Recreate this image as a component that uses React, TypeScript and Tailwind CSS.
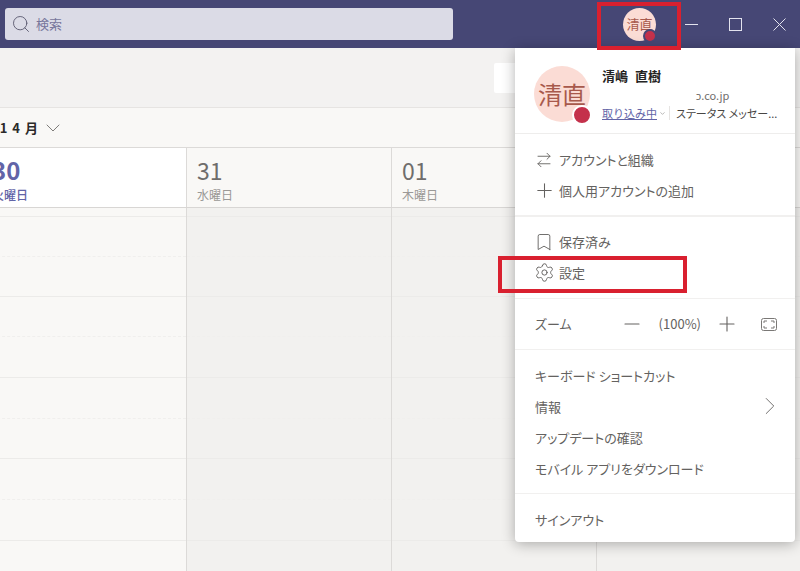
import { ArrowRightLeft, Bookmark, ChevronDown, ChevronRight, Minus, Plus, Search, Settings } from "lucide-react";

const FONT = "[font-family:'Noto_Sans_CJK_JP','Noto_Sans',sans-serif] [font-feature-settings:'palt']";

// px height of each calendar row, with whether its bottom line is dashed
const rows: [number, boolean][] = [
  [9, false],
  [40, true],
  [40, false],
  [40, true],
  [41, false],
  [41, true],
  [40, false],
  [41, true],
  [41, false],
  [31, false],
];

function DayColumn({ muted }: { muted: boolean }) {
  return (
    <div className={`w-[205px] shrink-0 border-r border-[#dcdad8] ${muted ? "bg-[#f2f1ef]" : "bg-[#f9f8f6]"}`}>
      {rows.map(([h, dashed], i) => (
        <div
          key={i}
          style={{ height: h }}
          className={`border-b ${dashed ? "border-dashed border-[#f0efed]" : "border-[#ecebe9]"}`}
        />
      ))}
    </div>
  );
}

function DayHead({ num, day }: { num: string; day: string }) {
  return (
    <div className="w-[205px] shrink-0 border-r border-[#dcdad8] pl-[10px] pt-[7px]">
      <div className="text-[23px] leading-[30px] text-[#6f6d6b]">{num}</div>
      <div className="mt-[2px] text-[12px] leading-[16px] text-[#9b9997]">{day}</div>
    </div>
  );
}

function MenuRow({ icon, label }: { icon?: React.ReactNode; label: string }) {
  return (
    <div className="h-[31px] flex items-center pl-[20px] text-[13px] text-[#646260]">
      {icon && <span className="w-[24px] h-[24px] flex items-center justify-center -ml-[3px] mr-[3px]">{icon}</span>}
      <span>{label}</span>
    </div>
  );
}

function Avatar({ big }: { big?: boolean }) {
  return (
    <div
      className={`relative rounded-full bg-[#fbdcd5] text-[#a8594c] flex items-center justify-center shrink-0 ${
        big ? "w-[56px] h-[56px] text-[24px]" : "w-[33px] h-[33px] text-[13px]"
      }`}
    >
      清直
      <span
        className={`absolute rounded-full bg-[#c4314b] ${
          big
            ? "w-[20px] h-[20px] right-[-2px] bottom-[-3px] border-2 border-white"
            : "w-[14px] h-[14px] right-[-1px] bottom-[-2px] border-2 border-[#464775]"
        }`}
      />
    </div>
  );
}

export default function App() {
  return (
    <div className={`relative w-[800px] h-[571px] overflow-hidden bg-[#f3f2f1] ${FONT}`}>
      <header className="h-[48px] bg-[#464775] flex items-center pl-[5px]">
        <div className="w-[448px] h-[32px] rounded-[3px] bg-[#dbdbe6] flex items-center pl-[6px] gap-[5px] text-[13px] text-[#77769b]">
          <Search size={20} strokeWidth={1.1} className="text-[#5b5a70]" />
          <span>検索</span>
        </div>
        <div className="ml-[170px]">
          <Avatar />
        </div>
        <div className="ml-[29px] flex items-center gap-[31px] text-[#e3e3ee]">
          <svg width="13" height="13" viewBox="0 0 13 13" fill="none" stroke="currentColor">
            <path d="M0 6.5h13" />
          </svg>
          <svg width="13" height="13" viewBox="0 0 13 13" fill="none" stroke="currentColor">
            <rect x="0.5" y="0.5" width="12" height="12" />
          </svg>
          <svg width="13" height="13" viewBox="0 0 13 13" fill="none" stroke="currentColor">
            <path d="M0.5 0.5l12 12M12.5 0.5l-12 12" />
          </svg>
        </div>
      </header>

      <div className="h-[60px] border-b border-[#e6e4e2] flex items-center pl-[494px]">
        <div className="w-[100px] h-[30px] bg-white rounded-[2px]" />
      </div>

      <div className="h-[40px] bg-[#f9f8f6] border-b border-[#dcdad8] flex items-center gap-[3px]">
        <div className="w-[38px] flex justify-end whitespace-nowrap text-[13px] font-bold text-[#2b2a29] [word-spacing:2px]">2021 4 月</div>
        <ChevronDown size={24} strokeWidth={0.8} className="text-[#5f5d5b]" />
      </div>

      <div className="flex h-[60px] border-b border-[#d8d6d4] bg-[#f9f8f6]">
        <div className="w-[187px] shrink-0 bg-white border-r border-[#dcdad8] overflow-hidden pt-[7px]">
          <div className="ml-[-8px] whitespace-nowrap">
            <div className="text-[24px] leading-[30px] font-bold text-[#6264a7]">30</div>
            <div className="mt-[2px] text-[12px] leading-[16px] font-medium text-[#6264a7]">火曜日</div>
          </div>
        </div>
        <DayHead num="31" day="水曜日" />
        <DayHead num="01" day="木曜日" />
      </div>

      <div className="flex">
        <div className="w-[187px] shrink-0 overflow-hidden flex justify-end">
          <DayColumn muted={false} />
        </div>
        <DayColumn muted />
        <DayColumn muted />
        <DayColumn muted />
      </div>

      {/* account menu */}
      <div className="absolute left-[515px] top-[48px] w-[280px] h-[494px] bg-white rounded-b-[4px] shadow-[0_2px_14px_rgba(0,0,0,0.3)]">
        <div className="h-[86px] border-b border-[#eeedec] flex pl-[19px] pt-[18px]">
          <Avatar big />
          <div className="ml-[12px] mt-[1px] flex-1 min-w-0">
            <div className="text-[13px] leading-[18px] font-bold text-[#252423] [word-spacing:4px]">清嶋 直樹</div>
            <div className="mt-[1px] text-[11px] leading-[18px] text-[#6f6d6b] pl-[94px]">ɔ.co.jp</div>
            <div className="flex items-center text-[11px] leading-[18px]">
              <span className="text-[#6264a7] underline [font-feature-settings:normal]">取り込み中</span>
              <ChevronDown size={7} className="ml-[2px] text-[#8a8886]" />
              <span className="ml-[3px] mr-[6px] w-px h-[14px] bg-[#e6e4e2]" />
              <span className="text-[#484644] whitespace-nowrap">ステータス メッセー...</span>
            </div>
          </div>
        </div>

        <div className="pt-[10px] pb-[9px] border-b-2 border-[#f1f0ef]">
          <MenuRow icon={<ArrowRightLeft size={18} strokeWidth={1.2} />} label="アカウントと組織" />
          <MenuRow icon={<Plus size={23} strokeWidth={1.1} />} label="個人用アカウントの追加" />
        </div>

        <div className="pt-[9px] pb-[10px] border-b border-[#f1f0ef]">
          <MenuRow icon={<Bookmark size={20} strokeWidth={1.1} />} label="保存済み" />
          <MenuRow icon={<Settings size={21} strokeWidth={1.1} />} label="設定" />
        </div>

        <div className="h-[51px] border-b border-[#f1f0ef] flex items-center pl-[20px] pr-[18px] text-[13px] text-[#646260]">
          <span className="flex-1">ズーム</span>
          <Minus size={24} strokeWidth={1.1} />
          <span className="ml-[15px] mr-[14px]">(100%)</span>
          <Plus size={24} strokeWidth={1.1} />
          <svg width="16" height="13" viewBox="0 0 16 13" fill="none" stroke="#7a7876" className="ml-[22px]">
            <rect x="0.5" y="0.5" width="15" height="12" rx="2" />
            <path d="M3 5V3h3M10 3h3v2M13 8v2h-3M6 10H3V8" />
          </svg>
        </div>

        <div className="pt-[10px] pb-[9px] border-b border-[#f1f0ef]">
          <MenuRow label="キーボード ショートカット" />
          <div className="relative">
            <MenuRow label="情報" />
            <ChevronRight size={30} strokeWidth={0.7} className="absolute right-[10px] top-[0px] text-[#5f5d5b]" />
          </div>
          <MenuRow label="アップデートの確認" />
          <MenuRow label="モバイル アプリをダウンロード" />
        </div>

        <div className="pt-[10px]">
          <MenuRow label="サインアウト" />
        </div>
      </div>

      {/* red callouts drawn over the screenshot */}
      <div className="absolute left-[597px] top-[2px] w-[84px] h-[48px] border-[4px] border-[#d9202f]" />
      <div className="absolute left-[498px] top-[256px] w-[189px] h-[37px] border-[4px] border-[#d9202f]" />
    </div>
  );
}
